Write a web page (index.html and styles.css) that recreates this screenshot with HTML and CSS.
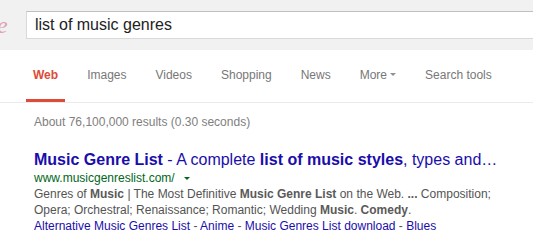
FILE: index.html
```html
<!DOCTYPE html>
<html lang="en">

<head>
  <meta charset="UTF-8">
  <title>list of music genres - Google Search</title>
  <link rel="stylesheet" href="styles.css">
</head>

<body>
  <header class="topbar">
    <div class="logo"><span class="logoE">e</span></div>
    <div class="searchBox">list of music genres</div>
  </header>

  <nav class="tabs">
    <a class="tab selected" href="#">Web</a>
    <a class="tab" href="#">Images</a>
    <a class="tab" href="#">Videos</a>
    <a class="tab" href="#">Shopping</a>
    <a class="tab" href="#">News</a>
    <a class="tab" href="#">More <span class="caret"></span></a>
    <a class="tab" href="#">Search tools</a>
  </nav>

  <div class="results">
    <div class="stats">About 76,100,000 results (0.30 seconds)</div>

    <div class="result">
      <h3 class="title"><a href="#"><b>Music Genre List</b> - A complete <b>list of music styles</b>, types and…</a></h3>
      <div class="url">www.musicgenreslist.com/ <span class="caret green"></span></div>
      <div class="snippet">Genres of <b>Music</b> | The Most Definitive <b>Music Genre List</b> on the Web. <b>...</b> Composition; Opera; Orchestral; Renaissance; Romantic; Wedding <b>Music</b>. <b>Comedy</b>.</div>
      <div class="sitelinks">
        <a href="#">Alternative Music Genres List</a> - <a href="#">Anime</a> - <a href="#">Music Genres List download</a> - <a href="#">Blues</a>
      </div>
    </div>
  </div>
</body>

</html>
```

FILE: styles.css
```css
html {
  font-family: Arial, "Liberation Sans", sans-serif;
}

body {
  margin: 0;
  width: 533px;
  height: 247px;
  overflow: hidden;
  background-color: #fff;
}

a {
  text-decoration: none;
}

.topbar {
  display: flex;
  align-items: center;
  height: 50px;
  background-color: #f1f1f1;
  gap: 16px;
}

.logo {
  width: 10px;
  overflow: hidden;
  height: 27px;
  display: flex;
  align-items: center;
}

.logoE {
  font-family: "Liberation Serif", serif;
  font-style: italic;
  font-size: 24px;
  color: #e0a0b6;
  margin-left: -3px;
}

.searchBox {
  flex: 1;
  height: 26px;
  line-height: 26px;
  padding-left: 8px;
  background-color: #fff;
  border: 1px solid #d9d9d9;
  border-top-color: #c0c0c0;
  border-right: none;
  font-size: 16px;
  color: #222;
}

.tabs {
  display: flex;
  gap: 15px;
  padding-left: 26px;
  height: 52px;
  border-bottom: 1px solid #ebebeb;
}

.tab {
  display: flex;
  align-items: center;
  gap: 3px;
  padding: 0 7px;
  font-size: 12px;
  color: #777;
  border-bottom: 3px solid transparent;
}

.tab.selected {
  color: #dd4b39;
  font-weight: bold;
  border-bottom-color: #dd4b39;
}

.caret {
  width: 0;
  height: 0;
  border-left: 3px solid transparent;
  border-right: 3px solid transparent;
  border-top: 3px solid #909090;
}

.caret.green {
  display: inline-block;
  vertical-align: middle;
  margin-left: 6px;
  border-top-color: #006621;
}

.results {
  padding-left: 34px;
}

.stats {
  font-size: 12px;
  color: #808080;
  margin-top: 12px;
  line-height: 15px;
  height: 35px;
}

.title {
  margin: 0;
  font-size: 16px;
  font-weight: normal;
  white-space: nowrap;
  line-height: 20px;
}

.title a {
  color: #1a0dab;
}

.url {
  font-size: 12px;
  color: #006621;
  line-height: 16px;
}

.snippet {
  font-size: 12px;
  color: #545454;
  line-height: 16px;
  width: 470px;
}

.snippet b {
  color: #5a5a5a;
}

.sitelinks {
  font-size: 12px;
  color: #545454;
  line-height: 16px;
}

.sitelinks a {
  color: #1a0dab;
}
```
